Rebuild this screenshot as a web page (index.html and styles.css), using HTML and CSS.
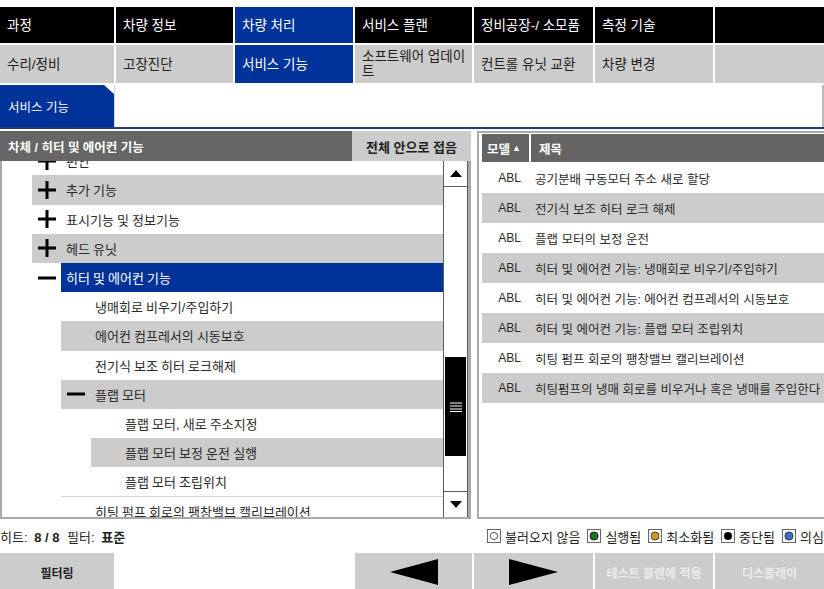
FILE: index.html
```html
<!DOCTYPE html>
<html lang="ko">
<head>
    <meta charset="UTF-8">
    <meta name="viewport" content="width=device-width, initial-scale=1.0">
    <title>서비스 기능</title>
    <link rel="stylesheet" href="styles.css">
</head>
<body>
<div class="app">
    <div class="top-strip"></div>

    <!-- Main / sub navigation -->
    <div class="tab-grid">
        <div class="tab main">과정</div>
        <div class="tab main">차량 정보</div>
        <div class="tab main active">차량 처리</div>
        <div class="tab main">서비스 플랜</div>
        <div class="tab main">정비공장-/ 소모품</div>
        <div class="tab main">측정 기술</div>
        <div class="tab main"></div>

        <div class="tab sub">수리/정비</div>
        <div class="tab sub">고장진단</div>
        <div class="tab sub active">서비스 기능</div>
        <div class="tab sub">소프트웨어 업데이<br>트</div>
        <div class="tab sub">컨트롤 유닛 교환</div>
        <div class="tab sub">차량 변경</div>
        <div class="tab sub"></div>
    </div>

    <div class="crumb-row">
        <div class="crumb">서비스 기능</div>
        <div class="crumb-fill"></div>
    </div>

    <div class="panels">
        <!-- Tree of functions -->
        <section class="tree-panel">
            <div class="panel-head">
                <div class="panel-title">차체 / 히터 및 에어컨 기능</div>
                <div class="collapse-btn">전체 안으로 접음</div>
            </div>
            <div class="tree-body">
                <div class="tree-view">
                    <div class="tree-list">
                        <div class="node lvl1">
                            <span class="toggle"><svg width="18" height="18"><path d="M0 9H18M9 0V18" stroke="#000" stroke-width="3"/></svg></span>
                            <span class="label">편안</span>
                        </div>
                        <div class="node lvl1 shade">
                            <span class="toggle"><svg width="18" height="18"><path d="M0 9H18M9 0V18" stroke="#000" stroke-width="3"/></svg></span>
                            <span class="label">추가 기능</span>
                        </div>
                        <div class="node lvl1">
                            <span class="toggle"><svg width="18" height="18"><path d="M0 9H18M9 0V18" stroke="#000" stroke-width="3"/></svg></span>
                            <span class="label">표시기능 및 정보기능</span>
                        </div>
                        <div class="node lvl1 shade">
                            <span class="toggle"><svg width="18" height="18"><path d="M0 9H18M9 0V18" stroke="#000" stroke-width="3"/></svg></span>
                            <span class="label">헤드 유닛</span>
                        </div>
                        <div class="node lvl1 selected">
                            <span class="toggle"><svg width="18" height="18"><path d="M0 9H18" stroke="#000" stroke-width="3"/></svg></span>
                            <span class="label">히터 및 에어컨 기능</span>
                        </div>
                        <div class="node lvl2">
                            <span class="toggle"></span>
                            <span class="label">냉매회로 비우기/주입하기</span>
                        </div>
                        <div class="node lvl2 shade">
                            <span class="toggle"></span>
                            <span class="label">에어컨 컴프레서의 시동보호</span>
                        </div>
                        <div class="node lvl2">
                            <span class="toggle"></span>
                            <span class="label">전기식 보조 히터 로크해제</span>
                        </div>
                        <div class="node lvl2 shade">
                            <span class="toggle"><svg width="18" height="18"><path d="M0 9H18" stroke="#000" stroke-width="3"/></svg></span>
                            <span class="label">플랩 모터</span>
                        </div>
                        <div class="node lvl3">
                            <span class="toggle"></span>
                            <span class="label">플랩 모터, 새로 주소지정</span>
                        </div>
                        <div class="node lvl3 shade">
                            <span class="toggle"></span>
                            <span class="label">플랩 모터 보정 운전 실행</span>
                        </div>
                        <div class="node lvl3">
                            <span class="toggle"></span>
                            <span class="label">플랩 모터 조립위치</span>
                        </div>
                        <div class="node lvl2 split">
                            <span class="toggle"></span>
                            <span class="label">히팅 펌프 회로의 팽창밸브 캘리브레이션</span>
                        </div>
                    </div>
                </div>
                <div class="scrollbar">
                    <div class="sb-btn up"><svg width="12" height="7"><path d="M0 7L6 0L12 7Z" fill="#000"/></svg></div>
                    <div class="sb-track">
                        <div class="sb-thumb"><svg width="12" height="10"><path d="M0 1H12M0 4H12M0 7H12M0 9.5H12" stroke="#fff" stroke-width="1.2"/></svg></div>
                    </div>
                    <div class="sb-btn down"><svg width="12" height="7"><path d="M0 0L12 0L6 7Z" fill="#000"/></svg></div>
                </div>
            </div>
        </section>

        <!-- Results list -->
        <section class="result-panel">
            <div class="result-head">
                <div class="col-model">모델 <span class="sort">▲</span></div>
                <div class="col-title">제목</div>
            </div>
            <div class="result-row"><span class="model">ABL</span><span class="title">공기분배 구동모터 주소 새로 할당</span></div>
            <div class="result-row shade"><span class="model">ABL</span><span class="title">전기식 보조 히터 로크 해제</span></div>
            <div class="result-row"><span class="model">ABL</span><span class="title">플랩 모터의 보정 운전</span></div>
            <div class="result-row shade"><span class="model">ABL</span><span class="title">히터 및 에어컨 기능: 냉매회로 비우기/주입하기</span></div>
            <div class="result-row"><span class="model">ABL</span><span class="title">히터 및 에어컨 기능: 에어컨 컴프레서의 시동보호</span></div>
            <div class="result-row shade"><span class="model">ABL</span><span class="title">히터 및 에어컨 기능: 플랩 모터 조립위치</span></div>
            <div class="result-row"><span class="model">ABL</span><span class="title">히팅 펌프 회로의 팽창밸브 캘리브레이션</span></div>
            <div class="result-row shade"><span class="model">ABL</span><span class="title">히팅펌프의 냉매 회로를 비우거나 혹은 냉매를 주입한다</span></div>
        </section>
    </div>

    <!-- Status line -->
    <div class="status">
        <div class="hits">히트: <b>8 / 8</b> 필터: <b>표준</b></div>
        <div class="legend">
            <span class="legend-item"><svg width="14" height="14"><rect x="0.5" y="0.5" width="13" height="13" fill="#fff" stroke="#666"/><circle cx="7" cy="7" r="3.6" fill="#fff" stroke="#555"/></svg>불러오지 않음</span>
            <span class="legend-item"><svg width="14" height="14"><rect x="0.5" y="0.5" width="13" height="13" fill="#fff" stroke="#666"/><circle cx="7" cy="7" r="4" fill="#137a1b" stroke="#222"/></svg>실행됨</span>
            <span class="legend-item"><svg width="14" height="14"><rect x="0.5" y="0.5" width="13" height="13" fill="#fff" stroke="#666"/><circle cx="7" cy="7" r="4" fill="#c99c1c" stroke="#444"/></svg>최소화됨</span>
            <span class="legend-item"><svg width="14" height="14"><rect x="0.5" y="0.5" width="13" height="13" fill="#fff" stroke="#666"/><circle cx="7" cy="7" r="4" fill="#000"/></svg>중단됨</span>
            <span class="legend-item"><svg width="14" height="14"><rect x="0.5" y="0.5" width="13" height="13" fill="#fff" stroke="#666"/><circle cx="7" cy="7" r="4" fill="#3d6fd8" stroke="#334"/></svg>의심</span>
        </div>
    </div>

    <!-- Bottom buttons -->
    <div class="button-bar">
        <div class="btn">필터링</div>
        <div class="btn-space"></div>
        <div class="btn-space"></div>
        <div class="btn"><svg width="48" height="26"><path d="M0 13L48 0V26Z" fill="#000"/></svg></div>
        <div class="btn"><svg width="49" height="26"><path d="M49 13L0 0V26Z" fill="#000"/></svg></div>
        <div class="btn disabled">테스트 플랜에 적용</div>
        <div class="btn disabled">디스플레이</div>
    </div>
</div>
</body>
</html>
```

FILE: styles.css
```css
/* Base */
* {
    box-sizing: border-box;
}

body {
    margin: 0;
    background-color: #ffffff;
    font-family: "Liberation Sans", "Noto Sans CJK KR", sans-serif;
    font-size: 13px;
    color: #1e1e1e;
}

.app {
    width: 824px;
    height: 589px;
    overflow: hidden;
}

.top-strip {
    height: 7px;
}

/* Navigation tabs */
.tab-grid,
.button-bar {
    display: grid;
    grid-template-columns: 114px 117px 118px 117px 119px 118px 1fr;
    gap: 2px;
}

.tab {
    display: flex;
    align-items: center;
    padding: 0 4px 0 7px;
    line-height: 15px;
    font-size: 13.5px;
}

.tab.main {
    height: 36px;
    background-color: #000000;
    color: #ffffff;
}

.tab.sub {
    height: 38px;
    background-color: #cccccc;
    color: #222222;
}

.tab.active {
    background-color: #003399;
    color: #ffffff;
}

/* Breadcrumb tab */
.crumb-row {
    display: flex;
    height: 44px;
    margin-top: 2px;
    border-bottom: 2px solid #1f3c7c;
}

.crumb {
    width: 114px;
    display: flex;
    align-items: center;
    padding-left: 8px;
    font-size: 12.5px;
    background-color: #003399;
    color: #ffffff;
    clip-path: polygon(0 0, 104px 0, 114px 9px, 114px 100%, 0 100%);
}

.crumb-fill {
    flex: 1;
    border-left: 1px solid #d4d4d4;
    border-right: 2px solid #b8b8b8;
}

/* Panels */
.panels {
    display: flex;
    gap: 6px;
    height: 388px;
    margin-top: 2px;
}

.tree-panel {
    width: 471px;
    flex-shrink: 0;
    display: flex;
    flex-direction: column;
}

.panel-head {
    display: flex;
    height: 30px;
    flex-shrink: 0;
}

.panel-title {
    width: 352px;
    display: flex;
    align-items: center;
    padding-left: 8px;
    font-size: 12.5px;
    background-color: #666666;
    color: #ffffff;
    font-weight: bold;
}

.collapse-btn {
    flex: 1;
    display: flex;
    align-items: center;
    justify-content: center;
    background-color: #cccccc;
    color: #222222;
    font-weight: bold;
}

.tree-body {
    flex: 1;
    min-height: 0;
    display: flex;
    border: 2px solid #a8a8a8;
    border-top: none;
    border-right-width: 3px;
}

.tree-view {
    flex: 1;
    overflow: hidden;
}

.tree-list {
    margin-top: -14.8px;
    word-spacing: -0.5px;
}

.node {
    display: flex;
    height: 29.2px;
    color: #2a2a2a;
}

.node.lvl1 {
    margin-left: 30px;
}

.node.lvl2 {
    margin-left: 59px;
}

.node.lvl3 {
    margin-left: 89px;
}

.node.shade {
    background-color: #cccccc;
}

.node.split {
    border-top: 1px solid #d6d6d6;
}

.toggle {
    width: 29px;
    flex-shrink: 0;
    display: flex;
    align-items: center;
    justify-content: center;
}

.toggle svg {
    display: block;
}

.label {
    flex: 1;
    display: flex;
    align-items: center;
    padding-left: 5px;
    white-space: nowrap;
}

.node.selected .label {
    background-color: #003399;
    color: #ffffff;
}

/* Scrollbar */
.scrollbar {
    width: 25px;
    display: flex;
    flex-direction: column;
    border-left: 1px solid #5c5c5c;
    border-right: 1px solid #5c5c5c;
}

.sb-btn {
    height: 26px;
    flex-shrink: 0;
    display: flex;
    align-items: center;
    justify-content: center;
}

.sb-btn.up {
    border-bottom: 1px solid #5c5c5c;
}

.sb-btn.down {
    border-top: 1px solid #5c5c5c;
}

.sb-track {
    flex: 1;
    padding: 0 1px;
}

.sb-thumb {
    height: 99px;
    margin-top: 170px;
    background-color: #000000;
    display: flex;
    align-items: center;
    justify-content: center;
}

/* Result list */
.result-panel {
    width: 360px;
    flex-shrink: 0;
    border: 2px solid #a9a9a9;
    padding: 1px 0 0 3px;
}

.result-head {
    display: flex;
    gap: 2px;
    height: 28px;
    margin-bottom: 1px;
    color: #ffffff;
    font-weight: bold;
    font-size: 12.5px;
}

.col-model {
    width: 47px;
    display: flex;
    align-items: center;
    padding-left: 5px;
    background-color: #646464;
}

.sort {
    font-size: 9px;
    margin-left: 2px;
}

.col-title {
    flex: 1;
    display: flex;
    align-items: center;
    padding-left: 8px;
    background-color: #646464;
}

.result-row {
    display: flex;
    gap: 2px;
    height: 30px;
    align-items: center;
    font-size: 12.5px;
    white-space: nowrap;
    color: #2a2a2a;
}

.result-row.shade {
    background-color: #cccccc;
}

.model {
    width: 47px;
    text-align: right;
    padding-right: 8px;
    font-size: 12px;
}

.title {
    padding-left: 4px;
}

/* Status line */
.status {
    display: flex;
    align-items: center;
    height: 34px;
    white-space: nowrap;
}

.hits {
    width: 487px;
    flex-shrink: 0;
    color: #222222;
}

.hits b {
    margin: 0 4px 0 3px;
}

.legend {
    display: flex;
    gap: 7px;
    color: #222222;
}

.legend-item {
    display: flex;
    align-items: center;
    gap: 4px;
}

.legend-item svg {
    display: block;
}

/* Bottom buttons */
.btn {
    height: 38px;
    display: flex;
    align-items: center;
    justify-content: center;
    font-size: 12px;
    background-color: #cccccc;
    color: #222222;
    font-weight: bold;
}

.btn.disabled {
    color: #ebebeb;
}
```
